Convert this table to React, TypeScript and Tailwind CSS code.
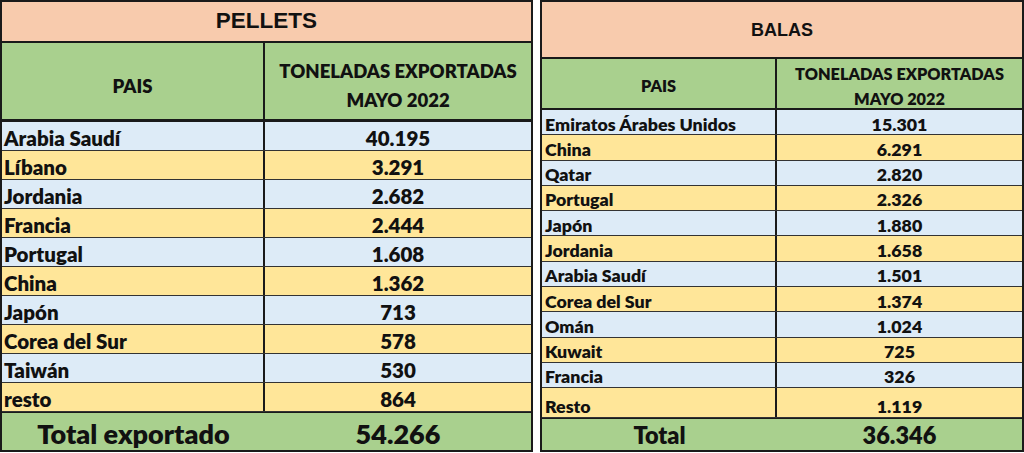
import React from "react";

const pellets: [string, string][] = [
  ["Arabia Saudí", "40.195"],
  ["Líbano", "3.291"],
  ["Jordania", "2.682"],
  ["Francia", "2.444"],
  ["Portugal", "1.608"],
  ["China", "1.362"],
  ["Japón", "713"],
  ["Corea del Sur", "578"],
  ["Taiwán", "530"],
  ["resto", "864"],
];

const balas: [string, string][] = [
  ["Emiratos Árabes Unidos", "15.301"],
  ["China", "6.291"],
  ["Qatar", "2.820"],
  ["Portugal", "2.326"],
  ["Japón", "1.880"],
  ["Jordania", "1.658"],
  ["Arabia Saudí", "1.501"],
  ["Corea del Sur", "1.374"],
  ["Omán", "1.024"],
  ["Kuwait", "725"],
  ["Francia", "326"],
  ["Resto", "1.119"],
];

const body = { fontFamily: "Lato, 'Open Sans', sans-serif" };
const arial = { fontFamily: "'Liberation Sans', Arial, sans-serif" };

export default function App() {
  return (
    <div className="flex w-[1024px] h-[453px] bg-white text-[#111]" style={body}>
      {/* PELLETS */}
      <div className="flex flex-col w-[533px] h-[452px] border-2 border-[#1a1a1a] font-extrabold overflow-hidden">
        <div
          className="shrink-0 h-[41px] bg-[#F8CBAD] border-b-2 border-[#1a1a1a] flex items-center justify-center text-[22.5px] leading-none font-bold"
          style={arial}
        >
          PELLETS
        </div>
        <div className="shrink-0 h-[79px] bg-[#A9D08E] border-b-[3px] border-[#1a1a1a] flex">
          <div className="w-[263px] border-r-2 border-[#1a1a1a] flex items-center justify-center pt-[10px] text-[18.5px] leading-none">
            PAIS
          </div>
          <div className="flex-1 flex items-center justify-center text-center pt-[10px] text-[18.5px] leading-[29px]">
            TONELADAS EXPORTADAS
            <br />
            MAYO 2022
          </div>
        </div>
        {pellets.map(([c, v], i) => (
          <div
            key={c}
            className={`shrink-0 h-[29px] flex border-b border-[#333] ${i % 2 === 0 ? "bg-[#DDEBF7]" : "bg-[#FFE699]"}`}
          >
            <div className="w-[263px] border-r-2 border-[#1a1a1a] flex items-end pb-[2px] pl-[2px] text-[20.5px] leading-none">
              {c}
            </div>
            <div className="flex-1 flex items-end justify-center pb-[2px] text-[20.5px] leading-none">
              {v}
            </div>
          </div>
        ))}
        <div className="flex-1 min-h-0 flex bg-[#A9D08E] border-t border-[#1a1a1a] pt-[4px]">
          <div className="w-[263px] flex items-center justify-center text-[27px] leading-none">
            Total exportado
          </div>
          <div className="flex-1 flex items-center justify-center text-[27px] leading-none">
            54.266
          </div>
        </div>
      </div>

      <div className="w-[7px]" />

      {/* BALAS */}
      <div className="flex flex-col w-[484px] h-[452px] border-2 border-[#1a1a1a] font-extrabold overflow-hidden">
        <div
          className="shrink-0 h-[57px] bg-[#F8CBAD] border-b-2 border-[#1a1a1a] flex items-center justify-center text-[18px] leading-none font-bold"
          style={arial}
        >
          BALAS
        </div>
        <div className="shrink-0 h-[51px] bg-[#A9D08E] border-b-2 border-[#1a1a1a] flex">
          <div className="w-[235px] border-r-2 border-[#1a1a1a] flex items-center justify-center pt-[5px] text-[16.3px] leading-none">
            PAIS
          </div>
          <div className="flex-1 flex items-center justify-center text-center pt-[5px] text-[16.3px] leading-[25px]">
            TONELADAS EXPORTADAS
            <br />
            MAYO 2022
          </div>
        </div>
        {balas.map(([c, v], i) => (
          <div
            key={c}
            className={`shrink-0 ${i === balas.length - 1 ? "h-[30px]" : "h-[25.3px]"} flex border-b border-[#333] ${i % 2 === 0 ? "bg-[#DDEBF7]" : "bg-[#FFE699]"}`}
          >
            <div className="w-[235px] border-r-2 border-[#1a1a1a] flex items-end pb-[1px] pl-[3px] text-[17.8px] leading-none">
              {c}
            </div>
            <div className="flex-1 flex items-end justify-center pb-[1px] text-[17.8px] leading-none">
              {v}
            </div>
          </div>
        ))}
        <div className="flex-1 min-h-0 flex bg-[#A9D08E] border-t border-[#1a1a1a] pt-[2px]">
          <div className="w-[235px] flex items-center justify-center text-[23.5px] leading-none">
            Total
          </div>
          <div className="flex-1 flex items-center justify-center text-[23.5px] leading-none">
            36.346
          </div>
        </div>
      </div>
    </div>
  );
}
